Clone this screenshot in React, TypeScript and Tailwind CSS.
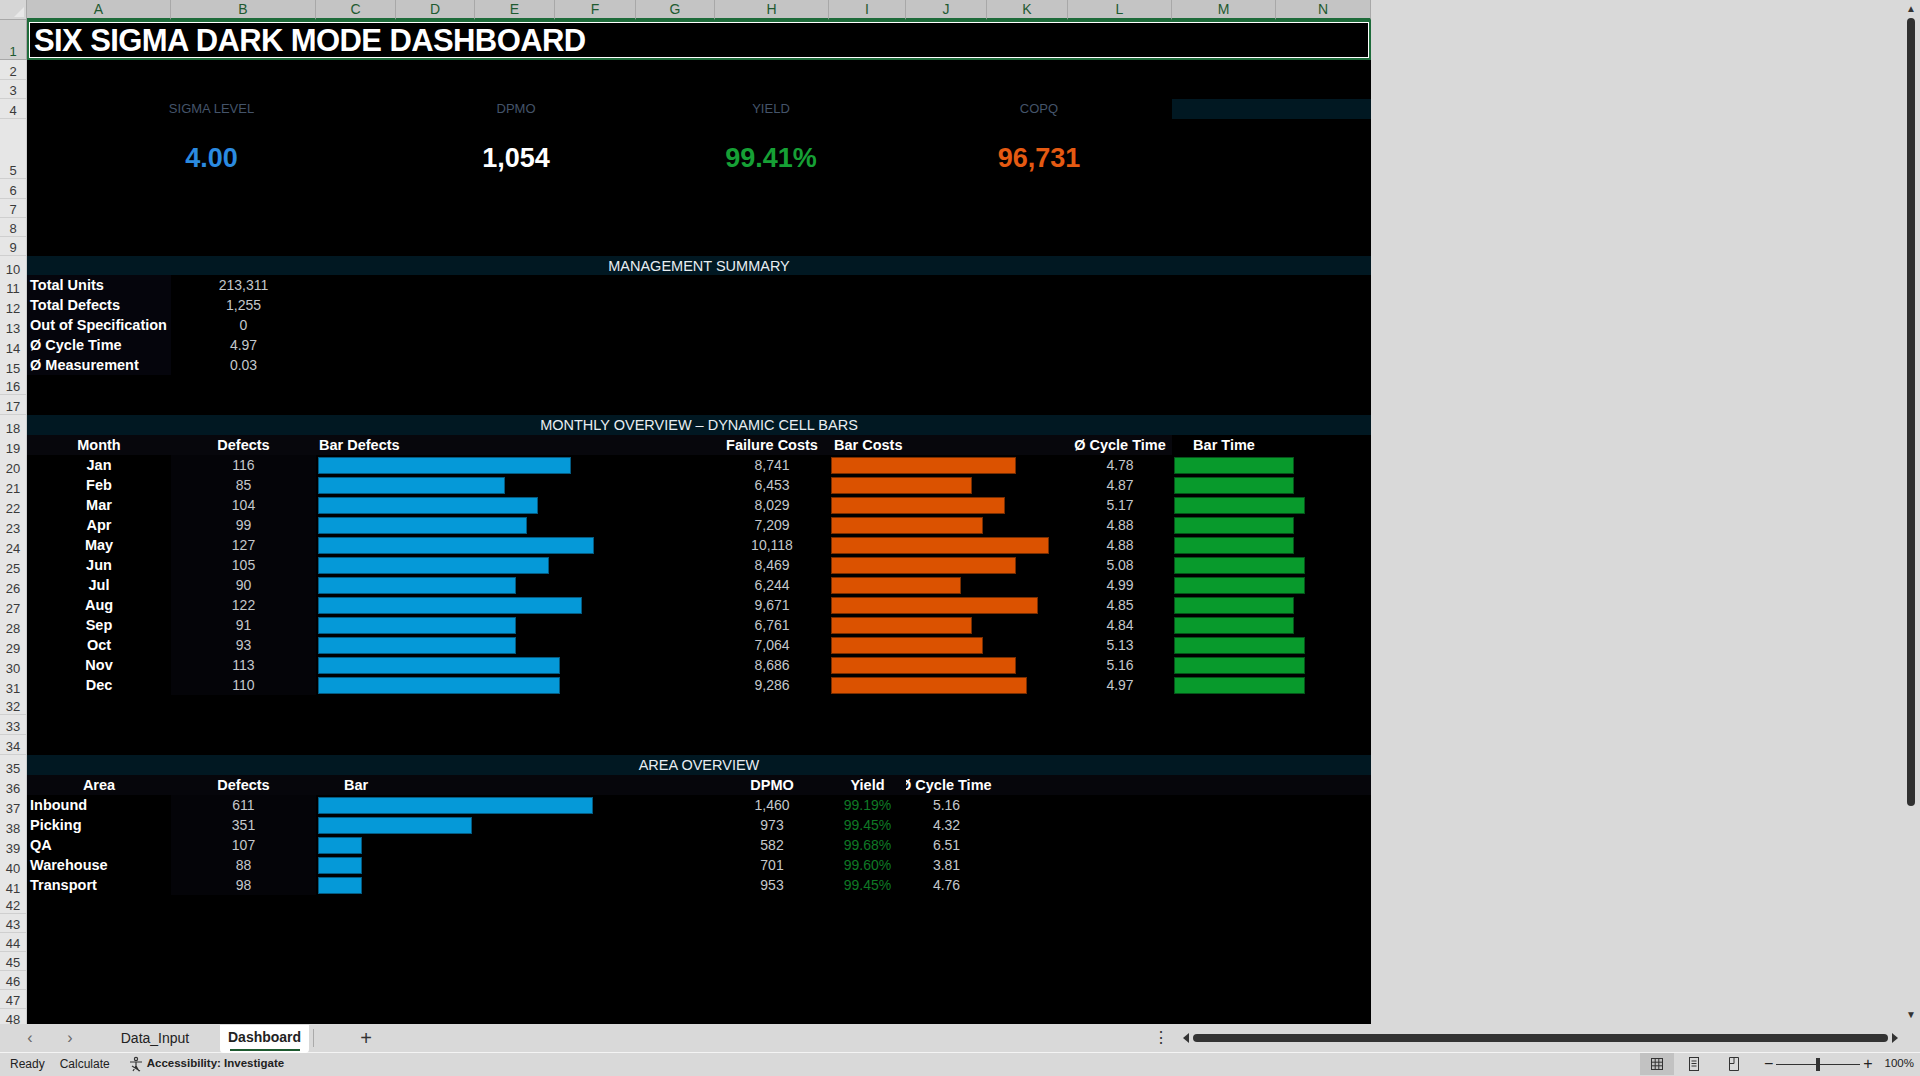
import React from "react";

const GRID =
  "grid grid-cols-[27px_144px_145px_80px_79px_80px_81px_79px_114px_77px_81px_81px_104px_104px_95px] overflow-hidden";

function RowHead({ n, sel }: { n: number | string; sel?: boolean }) {
  return (
    <div
      className={
        "col-[1/2] flex items-end justify-center pb-[1px] text-[13px] leading-none border-r border-b " +
        (sel ? "bg-[#d0d0d0] text-[#1e5a30] border-[#a8a8a8]" : "bg-[#e6e6e6] text-[#3a3a3a] border-[#cfcfcf]")
      }
    >
      {n}
    </div>
  );
}

function Row({ n, h, children, bg }: { n: number; h: string; children?: React.ReactNode; bg?: string }) {
  return (
    <div className={GRID + " " + h + " " + (bg ?? "bg-black")}>
      <RowHead n={n} />
      {children}
    </div>
  );
}

function Band({ n, title, h }: { n: number; title: string; h?: string }) {
  return (
    <Row n={n} h={h ?? "h-[20px]"}>
      <div className="col-[2/16] bg-[#011822] flex items-center justify-center text-[14.5px] text-[#e8eef2]">{title}</div>
    </Row>
  );
}

function Bar({ w, color }: { w: number; color: string }) {
  return (
    <div className="flex items-center h-full pl-[2px]">
      <div className={"h-[17px] border " + color} style={{ width: w }} />
    </div>
  );
}

const months = [
  ["Jan", 116, 466, "8,741", 830, "4.78", 120],
  ["Feb", 85, 412, "6,453", 794, "4.87", 120],
  ["Mar", 104, 439, "8,029", 821, "5.17", 131],
  ["Apr", 99, 430, "7,209", 803, "4.88", 120],
  ["May", 127, 484, "10,118", 857, "4.88", 120],
  ["Jun", 105, 448, "8,469", 830, "5.08", 131],
  ["Jul", 90, 421, "6,244", 785, "4.99", 131],
  ["Aug", 122, 475, "9,671", 848, "4.85", 120],
  ["Sep", 91, 421, "6,761", 794, "4.84", 120],
  ["Oct", 93, 421, "7,064", 803, "5.13", 131],
  ["Nov", 113, 457, "8,686", 830, "5.16", 131],
  ["Dec", 110, 457, "9,286", 839, "4.97", 131],
] as const;

const areas = [
  ["Inbound", 611, 275, "1,460", "99.19%", "5.16"],
  ["Picking", 351, 154, "973", "99.45%", "4.32"],
  ["QA", 107, 44, "582", "99.68%", "6.51"],
  ["Warehouse", 88, 44, "701", "99.60%", "3.81"],
  ["Transport", 98, 44, "953", "99.45%", "4.76"],
] as const;

const mgmt = [
  ["Total Units", "213,311"],
  ["Total Defects", "1,255"],
  ["Out of Specification", "0"],
  ["Ø Cycle Time", "4.97"],
  ["Ø Measurement", "0.03"],
];

const cols = ["A", "B", "C", "D", "E", "F", "G", "H", "I", "J", "K", "L", "M", "N"];

const val = "flex items-center justify-center text-[14px] text-[#c4c8cc]";
const lab = "flex items-center text-[14.5px] font-bold text-white";

export default function App() {
  let r = 11;
  return (
    <div className="w-[1920px] h-[1076px] flex flex-col bg-[#d9d9d9] overflow-hidden [font-family:Liberation_Sans,Arial,sans-serif]">
      <div className="flex h-[1024px]">
        <div className="w-[1371px] flex flex-col bg-black overflow-hidden">
          {/* column headers */}
          <div className={GRID + " h-[20px] shrink-0 bg-[#c4c4c4]"}>
            <div className="bg-[#d6d6d6] border-r border-b border-[#a8a8a8] relative">
              <div className="absolute right-[2px] bottom-[2px] w-0 h-0 border-l-[10px] border-l-transparent border-b-[10px] border-b-[#e8e8e8]" />
            </div>
            {cols.map((c) => (
              <div key={c} className="flex items-center justify-center text-[14px] leading-none text-[#1e5a30] border-r border-[#a8a8a8] border-b-2 border-b-[#1e6b3a]">
                {c}
              </div>
            ))}
          </div>
          {/* title row */}
          <div className={GRID + " h-[40px] shrink-0 bg-black"}>
            <RowHead n={1} sel />
            <div className="col-[2/16] h-[40px] border-2 border-[#1e6b3a] relative overflow-visible">
              <div className="h-full border border-white flex items-center pl-[4px] text-[31px] leading-none font-bold text-white tracking-[-0.6px] overflow-hidden">
                SIX SIGMA DARK MODE DASHBOARD
              </div>
            </div>
          </div>
          <Row n={2} h="h-[20px] shrink-0" />
          <Row n={3} h="h-[19px] shrink-0" />
          <Row n={4} h="h-[20px] shrink-0">
            <div className="col-[2/5] flex items-center justify-center text-[13px] text-[#44546a]">SIGMA LEVEL</div>
            <div className="col-[5/8] flex items-center justify-center text-[13px] text-[#44546a]">DPMO</div>
            <div className="col-[8/11] flex items-center justify-center text-[13px] text-[#44546a]">YIELD</div>
            <div className="col-[11/14] flex items-center justify-center text-[13px] text-[#44546a]">COPQ</div>
            <div className="col-[14/16] bg-[#011822]" />
          </Row>
          <Row n={5} h="h-[60px] shrink-0">
            <div className="col-[2/5] flex items-center justify-center pt-[18px] text-[27px] leading-none font-bold text-[#2b8be0]">4.00</div>
            <div className="col-[5/8] flex items-center justify-center pt-[18px] text-[27px] leading-none font-bold text-white">1,054</div>
            <div className="col-[8/11] flex items-center justify-center pt-[18px] text-[27px] leading-none font-bold text-[#16a035]">99.41%</div>
            <div className="col-[11/14] flex items-center justify-center pt-[18px] text-[27px] leading-none font-bold text-[#e55a12]">96,731</div>
          </Row>
          <Row n={6} h="h-[20px] shrink-0" />
          <Row n={7} h="h-[19px] shrink-0" />
          <Row n={8} h="h-[19px] shrink-0" />
          <Row n={9} h="h-[19px] shrink-0" />
          <Band n={10} title="MANAGEMENT SUMMARY" h="h-[19px] shrink-0" />
          {mgmt.map(([a, b]) => {
            const n = r++;
            return (
              <Row key={a} n={n} h="h-[20px] shrink-0">
                <div className={lab + " col-[2/3] pl-[3px] bg-[#05050c] whitespace-nowrap"}>{a}</div>
                <div className={val + " col-[3/4]"}>{b}</div>
              </Row>
            );
          })}
          <Row n={16} h="h-[20px] shrink-0" />
          <Row n={17} h="h-[20px] shrink-0" />
          <Band n={18} title="MONTHLY OVERVIEW – DYNAMIC CELL BARS" h="h-[20px] shrink-0" />
          <Row n={19} h="h-[20px] shrink-0">
            <div className="col-[2/14] row-[1/2] bg-[#07070c]" />
            <div className={lab + " col-[2/3] row-[1/2] justify-center z-10"}>Month</div>
            <div className={lab + " col-[3/4] row-[1/2] justify-center z-10"}>Defects</div>
            <div className={lab + " col-[4/9] row-[1/2] pl-[3px] z-10"}>Bar Defects</div>
            <div className={lab + " col-[9/10] row-[1/2] justify-center whitespace-nowrap z-10"}>Failure Costs</div>
            <div className={lab + " col-[10/13] row-[1/2] pl-[5px] z-10"}>Bar Costs</div>
            <div className={lab + " col-[13/14] row-[1/2] justify-center whitespace-nowrap z-10"}>Ø Cycle Time</div>
            <div className={lab + " col-[14/15] row-[1/2] justify-center z-10"}>Bar Time</div>
          </Row>
          {months.map(([m, d, bw, fc, cw, ct, tw], i) => (
            <Row key={m} n={20 + i} h="h-[20px] shrink-0">
              <div className={lab + " col-[2/3] justify-center"}>{m}</div>
              <div className={val + " col-[3/4] bg-[#040408]"}>{d}</div>
              <div className="col-[4/9]">
                <Bar w={Math.round((bw - 259) * 1.2245)} color="bg-[#0599d8] border-[#045b82]" />
              </div>
              <div className={val + " col-[9/10]"}>{fc}</div>
              <div className="col-[10/13]">
                <Bar w={Math.round((cw - 679) * 1.2245)} color="bg-[#db5200] border-[#7a2e00]" />
              </div>
              <div className={val + " col-[13/14]"}>{ct}</div>
              <div className="col-[14/16]">
                <Bar w={tw} color="bg-[#089a2c] border-[#05551a]" />
              </div>
            </Row>
          ))}
          <Row n={32} h="h-[20px] shrink-0" />
          <Row n={33} h="h-[20px] shrink-0" />
          <Row n={34} h="h-[20px] shrink-0" />
          <Band n={35} title="AREA OVERVIEW" h="h-[20px] shrink-0" />
          <Row n={36} h="h-[20px] shrink-0" bg="bg-[#06060b]">
            <div className={lab + " col-[2/3] justify-center"}>Area</div>
            <div className={lab + " col-[3/4] justify-center"}>Defects</div>
            <div className={lab + " col-[4/5] justify-center"}>Bar</div>
            <div className={lab + " col-[9/10] justify-center"}>DPMO</div>
            <div className={lab + " col-[10/11] justify-center"}>Yield</div>
            <div className={lab + " col-[11/12] whitespace-nowrap overflow-visible [clip-path:inset(0_-100px_0_0)]"}>
              <span className="-ml-[6px]">Ø Cycle Time</span>
            </div>
          </Row>
          {areas.map(([a, d, bw, dp, y, ct], i) => (
            <Row key={a} n={37 + i} h="h-[20px] shrink-0">
              <div className={lab + " col-[2/3] pl-[3px]"}>{a}</div>
              <div className={val + " col-[3/4] bg-[#040408]"}>{d}</div>
              <div className="col-[4/9]">
                <Bar w={bw} color="bg-[#0599d8] border-[#045b82]" />
              </div>
              <div className={val + " col-[9/10]"}>{dp}</div>
              <div className="col-[10/11] flex items-center justify-center text-[14px] text-[#0f7a25]">{y}</div>
              <div className={val + " col-[11/12]"}>{ct}</div>
            </Row>
          ))}
          {[42, 43, 44, 45, 46, 47, 48].map((n) => (
            <Row key={n} n={n} h="h-[19px] shrink-0" />
          ))}
        </div>
        <div className="flex-1 flex justify-end bg-[#d9d9d9]">
          <div className="w-[18px] flex flex-col items-center pt-[4px]">
            <div className="text-[10px] text-[#333] leading-none">▲</div>
            <div className="w-[8px] h-[788px] mt-[4px] rounded-full bg-[#303030]" />
            <div className="flex-1" />
            <div className="text-[10px] text-[#333] leading-none pb-[4px]">▼</div>
          </div>
        </div>
      </div>
      {/* sheet tabs */}
      <div className="h-[29px] flex items-center bg-[#d9d9d9] border-b border-[#f4f4f4] text-[14px] text-[#222]">
        <div className="w-[90px] flex items-center justify-around pl-[10px] text-[#666] text-[16px]">
          <span>‹</span>
          <span>›</span>
        </div>
        <div className="w-[130px] text-center">Data_Input</div>
        <div className="h-full pt-[1px]">
          <div className="h-[28px] px-[8px] bg-white rounded-b-[4px] flex flex-col items-center justify-center font-bold">
            <span>Dashboard</span>
            <span className="w-[70px] h-[2px] bg-[#1e5a30] mt-[1px]" />
          </div>
        </div>
        <div className="w-px h-[18px] bg-[#aaa] ml-[4px]" />
        <div className="ml-[46px] text-[20px] text-[#333] font-light">+</div>
        <div className="flex-1" />
        <div className="text-[16px] text-[#333] mr-[14px]">⋮</div>
        <div className="w-0 h-0 border-y-[5px] border-y-transparent border-r-[6px] border-r-[#333]" />
        <div className="w-[695px] h-[8px] rounded-full bg-[#333] mx-[4px]" />
        <div className="w-0 h-0 border-y-[5px] border-y-transparent border-l-[6px] border-l-[#333] mr-[22px]" />
      </div>
      {/* status */}
      <div className="h-[22px] flex items-center bg-[#d9d9d9] text-[12px] text-[#222]">
        <span className="ml-[10px]">Ready</span>
        <span className="ml-[15px]">Calculate</span>
        <svg className="ml-[18px]" width="16" height="16" viewBox="0 0 16 16" fill="none" stroke="#333" strokeWidth="1.2">
          <circle cx="8" cy="3" r="1.6" />
          <path d="M2 6h12M8 6v4M8 10l-3 5M8 10l3 5M4 10l8 5" />
        </svg>
        <span className="ml-[3px] font-bold text-[11.5px]">Accessibility: Investigate</span>
        <div className="flex-1" />
        <div className="w-[34px] h-full bg-[#c2c2c2] flex items-center justify-center">
          <svg width="14" height="14" viewBox="0 0 14 14" fill="none" stroke="#333">
            <rect x="1.5" y="1.5" width="11" height="11" />
            <path d="M5.2 1.5v11M8.8 1.5v11M1.5 5.2h11M1.5 8.8h11" />
          </svg>
        </div>
        <div className="w-[40px] flex items-center justify-center">
          <svg width="12" height="14" viewBox="0 0 12 14" fill="none" stroke="#333">
            <rect x="1.5" y="0.5" width="9" height="13" />
            <path d="M3.5 4h5M3.5 6.5h5M3.5 9h5" />
          </svg>
        </div>
        <div className="w-[40px] flex items-center justify-center">
          <svg width="12" height="14" viewBox="0 0 12 14" fill="none" stroke="#333">
            <path d="M1.5 0.5v13h9v-13M1.5 0.5h9M6 0.5v6H1.5" />
          </svg>
        </div>
        <span className="ml-[10px] text-[16px]">−</span>
        <div className="relative w-[84px] h-px bg-[#333] mx-[3px]">
          <div className="absolute left-[40px] -top-[6px] w-[4px] h-[13px] bg-[#333]" />
        </div>
        <span className="text-[16px]">+</span>
        <span className="ml-[12px] mr-[6px] text-[11.5px]">100%</span>
      </div>
    </div>
  );
}
